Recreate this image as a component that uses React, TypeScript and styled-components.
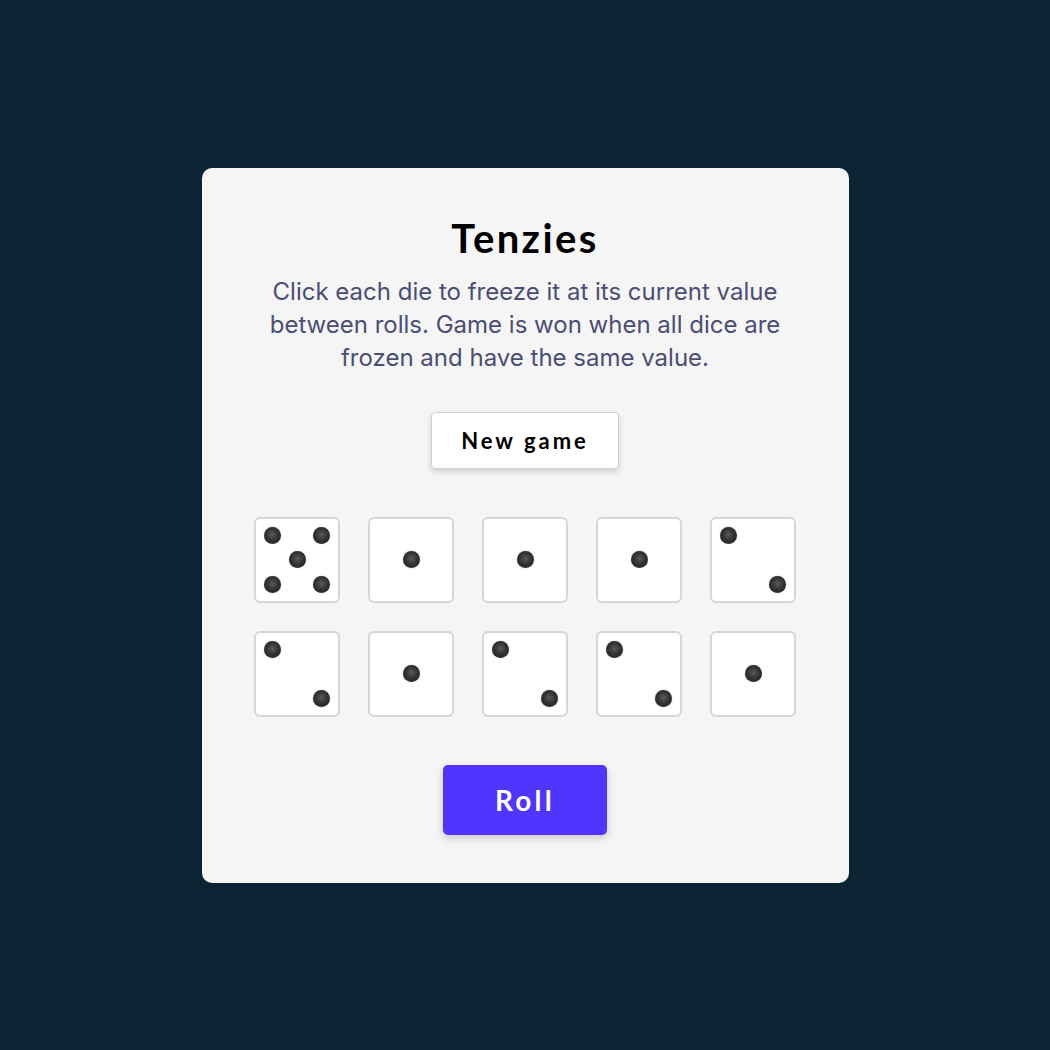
import React from "react";
import styled, { createGlobalStyle } from "styled-components";

const GlobalStyle = createGlobalStyle`
  html, body {
    margin: 0;
    padding: 0;
    background: #0B2434;
  }
  * { box-sizing: border-box; }
`;

const Page = styled.main`
  min-height: 100vh;
  display: flex;
  align-items: center;
  justify-content: center;
  background: #0B2434;
`;

const Card = styled.section`
  width: 647px;
  background: #F5F5F5;
  border-radius: 10px;
  padding: 46px 0 48px;
  display: flex;
  flex-direction: column;
  align-items: center;
`;

const Title = styled.h1`
  margin: 0;
  font-family: Lato, "Open Sans", sans-serif;
  font-weight: 700;
  font-size: 40px;
  line-height: 48px;
  letter-spacing: 2.4px;
  color: #000;
`;

const Description = styled.p`
  margin: 13px 0 0;
  width: 560px;
  text-align: center;
  font-family: Inter, sans-serif;
  font-size: 24px;
  line-height: 33px;
  color: #4A4E74;
`;

const NewGameButton = styled.button`
  margin-top: 38px;
  width: 188px;
  height: 57px;
  background: #fff;
  border: 1px solid #cfcfcf;
  border-radius: 4px;
  box-shadow: 0 3px 6px rgba(0, 0, 0, 0.15);
  font-family: Lato, "Open Sans", sans-serif;
  font-weight: 700;
  font-size: 22px;
  letter-spacing: 3px;
  color: #000;
  cursor: pointer;
`;

const DiceGrid = styled.div`
  margin-top: 48px;
  display: grid;
  grid-template-columns: repeat(5, 86px);
  grid-auto-rows: 86px;
  gap: 28px;
`;

const Die = styled.button`
  width: 86px;
  height: 86px;
  padding: 0;
  background: #fff;
  border: 2px solid #D6D6D6;
  border-radius: 6px;
  display: grid;
  grid-template-columns: repeat(3, 24.5px);
  grid-template-rows: repeat(3, 24.5px);
  place-content: center;
  place-items: center;
  cursor: pointer;
`;

const Pip = styled.span<{ $row: number; $col: number }>`
  grid-row: ${(p) => p.$row};
  grid-column: ${(p) => p.$col};
  width: 17px;
  height: 17px;
  border-radius: 50%;
  background: radial-gradient(circle at 50% 45%, #5a5a5a 0%, #333 45%, #1a1a1a 100%);
  box-shadow: 0 0 1px rgba(0, 0, 0, 0.6);
`;

const RollButton = styled.button`
  margin-top: 48px;
  width: 164px;
  height: 70px;
  background: #5035FF;
  border: none;
  border-radius: 5px;
  box-shadow: 0 3px 8px rgba(0, 0, 0, 0.18);
  font-family: Lato, "Open Sans", sans-serif;
  font-weight: 700;
  font-size: 28px;
  letter-spacing: 3.2px;
  color: #fff;
  cursor: pointer;
`;

const layouts: Record<number, [number, number][]> = {
  1: [[2, 2]],
  2: [[1, 1], [3, 3]],
  3: [[1, 1], [2, 2], [3, 3]],
  4: [[1, 1], [1, 3], [3, 1], [3, 3]],
  5: [[1, 1], [1, 3], [2, 2], [3, 1], [3, 3]],
  6: [[1, 1], [1, 3], [2, 1], [2, 3], [3, 1], [3, 3]],
};

const dice = [5, 1, 1, 1, 2, 2, 1, 2, 2, 1];

export default function App() {
  return (
    <>
      <GlobalStyle />
      <Page>
        <Card>
          <Title>Tenzies</Title>
          <Description>
            Click each die to freeze it at its current value between rolls. Game is won when all dice are
            frozen and have the same value.
          </Description>
          <NewGameButton>New game</NewGameButton>
          <DiceGrid>
            {dice.map((v, i) => (
              <Die key={i} aria-label={`Die showing ${v}`}>
                {layouts[v].map(([r, c], j) => (
                  <Pip key={j} $row={r} $col={c} />
                ))}
              </Die>
            ))}
          </DiceGrid>
          <RollButton>Roll</RollButton>
        </Card>
      </Page>
    </>
  );
}
